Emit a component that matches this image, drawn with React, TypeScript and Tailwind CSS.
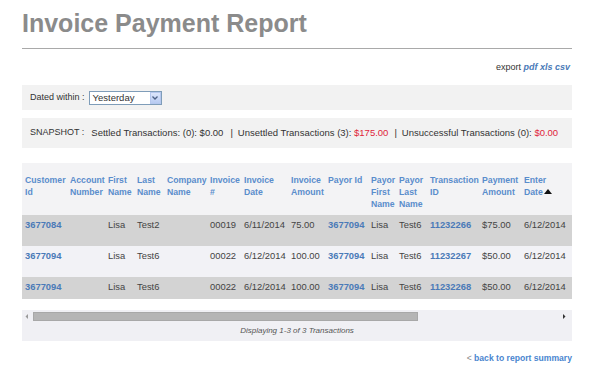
import React from "react";

type Cell = { v: string; link?: boolean };

const rows: Cell[][] = [
  [
    { v: "3677084", link: true }, { v: "" }, { v: "Lisa" }, { v: "Test2" }, { v: "" },
    { v: "00019" }, { v: "6/11/2014" }, { v: "75.00" }, { v: "3677094", link: true },
    { v: "Lisa" }, { v: "Test6" }, { v: "11232266", link: true }, { v: "$75.00" }, { v: "6/12/2014" },
  ],
  [
    { v: "3677094", link: true }, { v: "" }, { v: "Lisa" }, { v: "Test6" }, { v: "" },
    { v: "00022" }, { v: "6/12/2014" }, { v: "100.00" }, { v: "3677094", link: true },
    { v: "Lisa" }, { v: "Test6" }, { v: "11232267", link: true }, { v: "$50.00" }, { v: "6/12/2014" },
  ],
  [
    { v: "3677094", link: true }, { v: "" }, { v: "Lisa" }, { v: "Test6" }, { v: "" },
    { v: "00022" }, { v: "6/12/2014" }, { v: "100.00" }, { v: "3677094", link: true },
    { v: "Lisa" }, { v: "Test6" }, { v: "11232268", link: true }, { v: "$50.00" }, { v: "6/12/2014" },
  ],
];

const widths = [45, 38, 29, 30, 43, 34, 47, 37, 43, 28, 31, 52, 42, 51];

const headers: React.ReactNode[] = [
  <>Customer<br />Id</>,
  <>Account<br />Number</>,
  <>First<br />Name</>,
  <>Last<br />Name</>,
  <>Company<br />Name</>,
  <>Invoice<br />#</>,
  <>Invoice<br />Date</>,
  <>Invoice<br />Amount</>,
  <>Payor Id</>,
  <>Payor<br />First<br />Name</>,
  <>Payor<br />Last<br />Name</>,
  <>Transaction<br />ID</>,
  <>Payment<br />Amount</>,
  <>
    Enter
    <br />
    Date
    <svg width="8" height="5" viewBox="0 0 8 5" className="inline-block ml-[1px] align-[1px]">
      <polygon points="0,5 4,0 8,5" fill="#111" />
    </svg>
  </>,
];

const rowHeights = ["h-[31px]", "h-[31px]", "h-[22px]"];
const rowBgs = ["bg-[#d3d3d3]", "bg-[#f2f2f6]", "bg-[#d3d3d3]"];

export default function App() {
  return (
    <div className="w-[594px] h-[379px] bg-white overflow-hidden font-['Liberation_Sans',Arial,sans-serif]">
      <div className="ml-[22px] w-[550px]">
        <h1 className="mt-[11px] text-[25px] leading-[25px] font-bold text-[#8b8b8b]">
          Invoice Payment Report
        </h1>
        <div className="mt-[12px] border-t border-[#a9a9a9]" />

        <div className="mt-[12px] flex justify-end pr-[2px] text-[9px] leading-[12px] text-[#333]">
          <span>export&nbsp;</span>
          <span className="font-bold italic text-[#4a7ab8]">pdf xls csv</span>
        </div>

        <div className="mt-[12px] h-[25px] bg-[#f2f2f2] flex items-center pl-[8px] text-[9px] text-[#333]">
          <span>Dated within :</span>
          <div className="ml-[4px] w-[73px] h-[14px] border border-[#7f9db9] bg-white flex items-center justify-between">
            <span className="pl-[3px] text-[9.5px] leading-[12px] text-[#333]">Yesterday</span>
            <div className="w-[11px] h-[12px] mr-[0px] bg-gradient-to-b from-[#dce6fb] to-[#b8cbf2] border border-[#b6c8ee] flex items-center justify-center">
              <svg width="6" height="4" viewBox="0 0 6 4">
                <polyline points="0.5,0.5 3,3 5.5,0.5" fill="none" stroke="#4d6185" strokeWidth="1.3" />
              </svg>
            </div>
          </div>
        </div>

        <div className="mt-[8px] h-[30px] bg-[#f2f2f2] flex items-center pl-[8px] text-[9.5px] text-[#333] whitespace-nowrap">
          <span className="text-[9px]">SNAPSHOT :</span>
          <span className="ml-[7px]">Settled Transactions: (0): $0.00</span>
          <span className="ml-[7px]">|</span>
          <span className="ml-[5px]">
            Unsettled Transactions (3): <span className="text-[#e0243a]">$175.00</span>
          </span>
          <span className="ml-[6px]">|</span>
          <span className="ml-[5px]">
            Unsuccessful Transactions (0): <span className="text-[#e0243a]">$0.00</span>
          </span>
        </div>

        <div className="mt-[15px]">
          <table className="table-fixed border-collapse w-[550px]">
            <colgroup>
              {widths.map((w, i) => (
                <col key={i} style={{ width: w }} />
              ))}
            </colgroup>
            <thead>
              <tr className="h-[52px] bg-[#f3f3f5]">
                {headers.map((h, i) => (
                  <th
                    key={i}
                    className="align-top text-left pl-[3px] pt-[11px] pb-[5px] text-[8.7px] leading-[12px] font-bold text-[#5a8dcc] whitespace-nowrap overflow-visible"
                  >
                    {h}
                  </th>
                ))}
              </tr>
            </thead>
            <tbody>
              {rows.map((r, ri) => (
                <tr key={ri} className={`${rowHeights[ri]} ${rowBgs[ri]}`}>
                  {r.map((c, ci) => (
                    <td
                      key={ci}
                      className={`align-top pl-[3px] pt-[4px] text-[9.4px] leading-[12px] whitespace-nowrap ${
                        c.link ? "font-bold text-[#4a7ab8]" : "text-[#444]"
                      }`}
                    >
                      {c.v}
                    </td>
                  ))}
                </tr>
              ))}
            </tbody>
          </table>
        </div>

        <div className="mt-[11px] h-[31px] bg-[#f0f0f4] flex flex-col">
          <div className="mt-[2px] h-[9px] flex items-center">
            <svg width="11" height="9" viewBox="0 0 11 9" className="shrink-0">
              <polygon points="6,2 3.5,4.5 6,7" fill="#9a9a9a" />
            </svg>
            <div className="h-[9px] w-[385px] bg-[#b5b5b5] border border-[#a8a8a8]" />
            <div className="flex-1" />
            <svg width="11" height="9" viewBox="0 0 11 9" className="shrink-0 mr-[2px]">
              <polygon points="4,2 6.5,4.5 4,7" fill="#333" />
            </svg>
          </div>
          <div className="mt-[4px] text-center text-[8px] leading-[12px] italic text-[#555]">
            Displaying 1-3 of 3 Transactions
          </div>
        </div>

        <div className="mt-[11px] flex justify-end text-[8.6px] leading-[12px]">
          <span className="text-[#888]">&lt;&nbsp;</span>
          <span className="font-bold text-[#4a86cf]">back to report summary</span>
        </div>
      </div>
    </div>
  );
}
